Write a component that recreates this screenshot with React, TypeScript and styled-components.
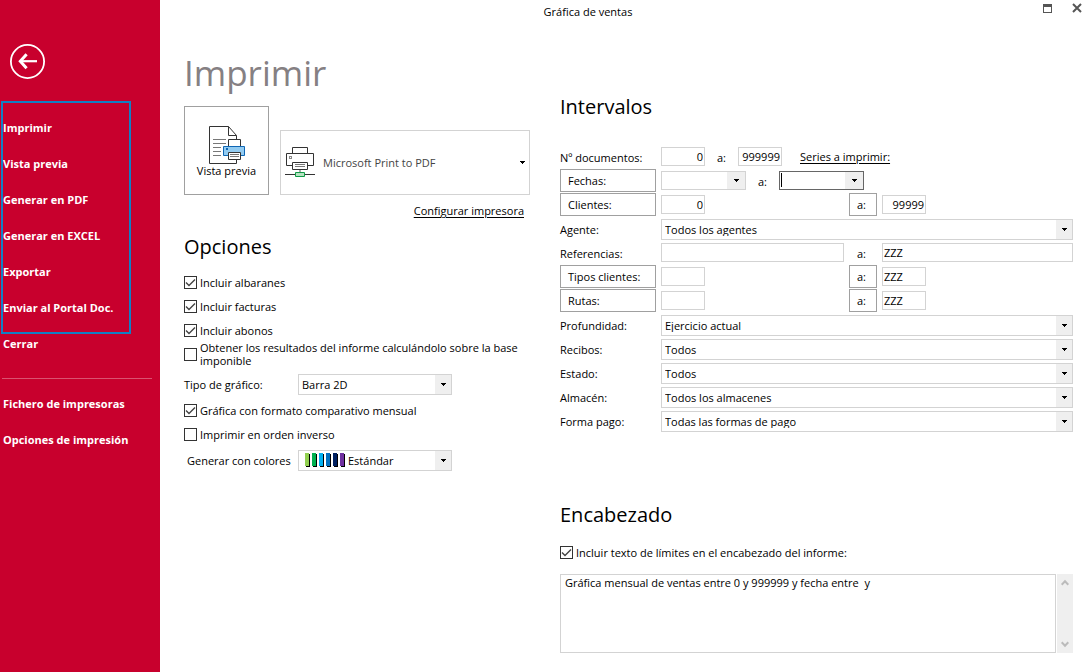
import React, { useId } from "react";
import styled, { createGlobalStyle } from "styled-components";

const GlobalStyle = createGlobalStyle`
  *, *::before, *::after { box-sizing: border-box; }
  body { margin: 0; background: #fff; color: #000; }
  body, button, input, select, textarea {
    font-family: "Open Sans", "Noto Sans", sans-serif;
    font-size: 11px;
    line-height: 13px;
  }
  button, input, select, textarea { margin: 0; padding: 0; border-radius: 0; color: inherit; background: #fff; }
`;

/* ---------- shell ---------- */

const Shell = styled.div`
  display: grid;
  grid-template-columns: 160px minmax(0, 1fr);
  min-height: 100vh;
`;

const Sidebar = styled.nav`
  display: flex;
  flex-direction: column;
  align-items: flex-start;
  padding: 43px 8px 0 1px;
  background: #c8002d;
  color: #fff;
`;

const BackButton = styled.button`
  width: 37px;
  height: 37px;
  margin-left: 8px;
  border: 0;
  background: none;
  svg { display: block; }
`;

const MenuFrame = styled.div`
  display: flex;
  flex-direction: column;
  width: 130px;
  height: 233px;
  margin-top: 21px;
  padding-top: 6px;
  border: 2px solid #127fc4;
`;

const MenuItem = styled.button<{ $compact?: boolean; $indent?: boolean }>`
  height: ${(p) => (p.$compact ? 18 : 36)}px;
  margin-left: ${(p) => (p.$indent ? 2 : 0)}px;
  border: 0;
  background: none;
  color: #fff;
  font-size: 11px;
  font-weight: 700;
  text-align: left;
  white-space: nowrap;
`;

const Divider = styled.hr`
  align-self: stretch;
  height: 1px;
  margin: 26px 0 6px 1px;
  border: 0;
  background: #da5270;
`;

const Main = styled.main`
  display: flex;
  flex-direction: column;
`;

const TitleBar = styled.header`
  display: flex;
  height: 24px;
`;

const WindowTitle = styled.div`
  flex: 1;
  padding-top: 5px;
  text-align: center;
  line-height: 14px;
`;

const WindowControls = styled.div`
  display: flex;
  gap: 14px;
  width: 74px;
  padding-left: 23px;
`;

const IconButton = styled.button`
  display: grid;
  place-items: center;
  width: 16px;
  height: 16px;
  border: 0;
  background: none;
`;

const Columns = styled.div`
  display: grid;
  grid-template-columns: 346px minmax(0, 1fr);
  column-gap: 30px;
  padding: 0 17px 19px 24px;
`;

const Column = styled.div<{ $top: number }>`
  display: flex;
  flex-direction: column;
  padding-top: ${(p) => p.$top}px;
`;

const PageTitle = styled.h1`
  margin: 0;
  color: #858083;
  font-size: 35px;
  font-weight: 400;
  line-height: 48px;
`;

const SectionTitle = styled.h2`
  margin: 0;
  font-size: 20px;
  font-weight: 400;
  line-height: 28px;
`;

const TextLink = styled.a`
  color: #000;
  text-decoration: underline;
  text-underline-offset: 2px;
`;

/* ---------- printer ---------- */

const PrinterRow = styled.div`
  display: grid;
  grid-template-columns: 85px minmax(0, 1fr);
  column-gap: 11px;
  align-items: end;
  margin-top: 9px;
`;

const PreviewButton = styled.button`
  display: flex;
  flex-direction: column;
  align-items: center;
  height: 89px;
  padding-top: 19px;
  border: 1px solid #a0a0a0;
`;

const PrinterLinkRow = styled.div`
  display: flex;
  justify-content: flex-end;
  margin: 9px 0 16px;
  padding-right: 6px;
`;

/* ---------- controls ---------- */

const SelectFrame = styled.div<{ $height: number; $plain?: boolean }>`
  display: grid;
  grid-template-columns: minmax(0, 1fr) ${(p) => (p.$plain ? 13 : 15)}px;
  width: 100%;
  height: ${(p) => p.$height}px;
  border: 1px solid #d3d3d3;
  background: ${(p) =>
    p.$plain ? "#fff" : "linear-gradient(to left, #efefef 16px, #fff 16px)"};
  > * { grid-row: 1; }
`;

const NativeSelect = styled.select<{ $pad: number; $muted?: boolean }>`
  grid-column: 1 / -1;
  appearance: none;
  padding: 0 18px 0 ${(p) => p.$pad}px;
  border: 0;
  outline: 0;
  background: transparent;
  color: ${(p) => (p.$muted ? "#444" : "#000")};
`;

const Leading = styled.span`
  grid-column: 1;
  place-self: center start;
  display: flex;
  pointer-events: none;
`;

const Trailing = styled.span`
  grid-column: 2;
  place-self: center;
  display: flex;
  pointer-events: none;
`;

const TextInput = styled.input<{ $right?: boolean; $wide?: boolean }>`
  width: ${(p) => (p.$wide ? "100%" : "44px")};
  height: 19px;
  padding: 0 1px;
  border: 1px solid #d3d3d3;
  outline: 0;
  text-align: ${(p) => (p.$right ? "right" : "left")};
`;

const ComboFrame = styled.div<{ $active?: boolean }>`
  display: flex;
  width: 85px;
  height: 19px;
  padding-left: 1px;
  border: 1px solid ${(p) => (p.$active ? "#666" : "#d3d3d3")};
  align-items: stretch;
`;

const ComboInput = styled.input`
  flex: 1;
  min-width: 0;
  border: 0;
  outline: 0;
`;

const ComboButton = styled.button`
  display: grid;
  place-items: center;
  width: 18px;
  border: 0;
  background: #efefef;
`;

const Caret = styled.span`
  width: 1px;
  margin: 1px 0 2px;
  background: #000;
`;

const CheckRow = styled.label`
  display: flex;
  align-items: center;
  gap: 3px;
  height: 24px;
`;

const CheckInput = styled.input`
  appearance: none;
  flex: none;
  width: 13px;
  height: 13px;
  border: 1px solid #333;
  background: #fff;
  &:checked {
    background: url("data:image/svg+xml,%3Csvg xmlns='http://www.w3.org/2000/svg' width='11' height='11'%3E%3Cpath d='M1 5.5L4 8.5L10 2.5' fill='none' stroke='%23444' stroke-width='1.4'/%3E%3C/svg%3E") center no-repeat;
  }
`;

const OptionList = styled.div`
  display: flex;
  flex-direction: column;
  margin-top: 9px;
`;

const OptionField = styled.div<{ $pad?: number }>`
  display: grid;
  grid-template-columns: 114px 154px;
  align-items: center;
  height: 26px;
  label { padding-left: ${(p) => p.$pad ?? 0}px; }
`;

const ChartTypeField = styled(OptionField)`
  margin: 5px 0 1px;
`;

const PaletteField = styled(OptionField)`
  margin-top: 1px;
`;

/* ---------- ranges ---------- */

const RangeList = styled.div`
  margin-top: 24px;
`;

const RangeRow = styled.div`
  display: grid;
  grid-template-columns: 96px minmax(0, 1fr);
  column-gap: 5px;
  height: 24px;
`;

const RangeLabel = styled.label`
  padding-top: 6px;
  white-space: nowrap;
`;

const RangeButton = styled.button`
  height: 23px;
  padding-left: 7px;
  border: 1px solid #a0a0a0;
  text-align: left;
`;

const Inline = styled.div<{ $gap: number }>`
  display: flex;
  column-gap: ${(p) => p.$gap}px;
  padding-top: 2px;
`;

const Separator = styled.label`
  width: 9px;
  padding-top: 4px;
`;

const Split = styled.div`
  display: grid;
  grid-template-columns: 183px 28px minmax(0, 1fr);
  column-gap: 5px;
  > input { margin-top: 2px; }
  > label { padding: 6px 0 0 8px; }
`;

const Stretch = styled.div`
  padding-top: 2px;
`;

const SeriesLink = styled(TextLink)`
  padding: 3px 0 0 6px;
`;

/* ---------- heading text ---------- */

const HeaderSection = styled.section`
  display: flex;
  flex-direction: column;
  margin-top: 68px;
`;

const HeaderCheck = styled.div`
  margin: 11px 0 10px;
`;

const MemoFrame = styled.div`
  display: grid;
  grid-template-columns: minmax(0, 1fr) 16px;
  column-gap: 1px;
  height: 79px;
`;

const Memo = styled.textarea`
  padding: 1px 4px;
  border: 1px solid #d3d3d3;
  outline: 0;
  resize: none;
  overflow: hidden;
`;

const ScrollTrack = styled.div`
  display: flex;
  flex-direction: column;
  justify-content: space-between;
  background: #efefef;
  button { height: 17px; }
`;

/* ---------- drawings ---------- */

const DownArrow = () => (
  <svg width="5" height="3" viewBox="0 0 5 3" shapeRendering="crispEdges">
    <path d="M0 0h5v1H4v1H3v1H2V2H1V1H0z" fill="#000" />
  </svg>
);

const BackIcon = () => (
  <svg width="37" height="37" viewBox="0 0 37 37" fill="none" stroke="#fff">
    <circle cx="18.5" cy="18.5" r="16.6" strokeWidth="1.8" />
    <path d="M28 18.2H12" strokeWidth="2.2" />
    <path d="M17.6 11.2L11.3 18.2L17.6 25.2" strokeWidth="3" />
  </svg>
);

const PreviewIcon = () => (
  <svg width="36" height="38" viewBox="0 0 36 38" fill="none">
    <path d="M27.5 37.5H.5V.5H19.5L27.5 9.5V37.5z" fill="#fff" stroke="#333" />
    <path d="M19.5 .5V9.5H27.5" stroke="#333" />
    <path d="M4 13.5H17M4 17.5H17M4 21.5H12M4 25.5H12M4 29.5H12" stroke="#777" />
    <path d="M19.5 20V13.5H31.5V20" fill="#fff" stroke="#333" />
    <path d="M14.5 20.5H35.5V29.5H14.5z" fill="#92cbf1" stroke="#0f66b4" />
    <rect x="17" y="22" width="2" height="2" fill="#0f66b4" />
    <path d="M19.5 26.5H31.5V33.5H19.5z" fill="#fff" stroke="#333" />
    <path d="M21 28.5H30M21 30.5H30" stroke="#777" />
  </svg>
);

const PrinterIcon = () => (
  <svg width="30" height="31" viewBox="0 0 30 31" fill="none">
    <path d="M7.5 6.5V.5H22.5V6.5" fill="#fff" stroke="#333" />
    <path d="M1.5 6.5H28.5V18.5H1.5z" fill="#fff" stroke="#333" />
    <rect x="4.5" y="9.5" width="2" height="2" stroke="#888" />
    <path d="M7.5 15.5H22.5V22.5H7.5z" fill="#fff" stroke="#333" />
    <path d="M10 17.5H20M10 19.5H20" stroke="#777" />
    <path d="M15 23V26" stroke="#aaa" strokeWidth="2" />
    <path d="M0 27.5H30" stroke="#333" />
    <path d="M10.5 25.5H19.5V29.5H10.5z" fill="#b5e3c1" stroke="#119a46" />
  </svg>
);

const palette = ["#92d050", "#00b050", "#00b0f0", "#0070c0", "#002060", "#7030a0"];

const PaletteIcon = () => (
  <svg width="41" height="14" viewBox="0 0 41 14" shapeRendering="crispEdges">
    {palette.map((color, i) => (
      <g key={color}>
        <rect x={i * 7 + 1} y="1" width="4" height="13" fill="#000" />
        <rect x={i * 7} y="0" width="4" height="13" fill={color} />
      </g>
    ))}
  </svg>
);

const RestoreIcon = () => (
  <svg width="9" height="9" viewBox="0 0 9 9" shapeRendering="crispEdges">
    <path d="M0 0h9v9H0zM1 3v5h7V3z" fill="#555" fillRule="evenodd" />
  </svg>
);

const CloseIcon = () => (
  <svg width="10" height="10" viewBox="0 0 10 10">
    <path d="M1 1L9 9M9 1L1 9" stroke="#555" strokeWidth="2" />
  </svg>
);

const ScrollChevron = ({ down }: { down?: boolean }) => (
  <svg width="8" height="7" viewBox="0 0 8 7" fill="none" stroke="#bbb" strokeWidth="2">
    <path d={down ? "M.7 1.3L4 4.8L7.3 1.3" : "M.7 5.7L4 2.2L7.3 5.7"} />
  </svg>
);

/* ---------- composed parts ---------- */

type SelectProps = {
  id?: string;
  label?: string;
  value: string;
  height?: number;
  pad?: number;
  muted?: boolean;
  leading?: React.ReactNode;
};

const Select = ({ id, label, value, height = 21, pad = 3, muted, leading }: SelectProps) => (
  <SelectFrame $height={height} $plain={muted}>
    <NativeSelect id={id} aria-label={label} $pad={pad} $muted={muted}>
      <option>{value}</option>
    </NativeSelect>
    {leading && <Leading>{leading}</Leading>}
    <Trailing><DownArrow /></Trailing>
  </SelectFrame>
);

const Check = ({ children, checked }: { children: React.ReactNode; checked?: boolean }) => (
  <CheckRow>
    <CheckInput type="checkbox" defaultChecked={checked} />
    <span>{children}</span>
  </CheckRow>
);

const DateCombo = ({ id, label, active }: { id?: string; label: string; active?: boolean }) => (
  <ComboFrame $active={active}>
    {active && <Caret />}
    <ComboInput id={id} type="text" aria-label={label} />
    <ComboButton type="button" aria-label="Abrir calendario"><DownArrow /></ComboButton>
  </ComboFrame>
);

const CodeRange = ({ name, from, to, right }: { name: string; from: string; to: string; right?: boolean }) => (
  <RangeRow>
    <RangeButton type="button">{name}:</RangeButton>
    <Split>
      <TextInput type="text" aria-label={`${name} desde`} defaultValue={from} $right={right} />
      <RangeButton type="button">a:</RangeButton>
      <TextInput type="text" aria-label={`${name} hasta`} defaultValue={to} $right={right} />
    </Split>
  </RangeRow>
);

const SelectRange = ({ name, value }: { name: string; value: string }) => {
  const id = useId();
  return (
    <RangeRow>
      <RangeLabel htmlFor={id}>{name}:</RangeLabel>
      <Stretch><Select id={id} value={value} /></Stretch>
    </RangeRow>
  );
};

const LeadPad = styled.span<{ $left: number }>`
  display: flex;
  padding-left: ${(p) => p.$left}px;
`;

const PrinterLead = () => <LeadPad $left={4}><PrinterIcon /></LeadPad>;
const PaletteLead = () => <LeadPad $left={6}><PaletteIcon /></LeadPad>;

const actions = ["Imprimir", "Vista previa", "Generar en PDF", "Generar en EXCEL", "Exportar", "Enviar al Portal Doc."];

export default function App() {
  return (
    <>
      <GlobalStyle />
      <Shell>
        <Sidebar>
          <BackButton type="button" aria-label="Volver"><BackIcon /></BackButton>
          <MenuFrame>
            {actions.map((name) => <MenuItem key={name} type="button">{name}</MenuItem>)}
          </MenuFrame>
          <MenuItem type="button" $compact $indent>Cerrar</MenuItem>
          <Divider />
          <MenuItem type="button" $indent>Fichero de impresoras</MenuItem>
          <MenuItem type="button" $indent>Opciones de impresión</MenuItem>
        </Sidebar>
        <Main>
          <TitleBar>
            <WindowTitle>Gráfica de ventas</WindowTitle>
            <WindowControls>
              <IconButton type="button" aria-label="Maximizar"><RestoreIcon /></IconButton>
              <IconButton type="button" aria-label="Cerrar ventana"><CloseIcon /></IconButton>
            </WindowControls>
          </TitleBar>
          <Columns>
            <Column $top={25}>
              <PageTitle>Imprimir</PageTitle>
              <PrinterRow>
                <PreviewButton type="button"><PreviewIcon />Vista previa</PreviewButton>
                <Select
                  label="Impresora"
                  value="Microsoft Print to PDF"
                  height={65}
                  pad={42}
                  muted
                  leading={<PrinterLead />}
                />
              </PrinterRow>
              <PrinterLinkRow><TextLink href="#configurar">Configurar impresora</TextLink></PrinterLinkRow>
              <SectionTitle>Opciones</SectionTitle>
              <OptionList>
                <Check checked>Incluir albaranes</Check>
                <Check checked>Incluir facturas</Check>
                <Check checked>Incluir abonos</Check>
                <Check>Obtener los resultados del informe calculándolo sobre la base imponible</Check>
                <ChartTypeField>
                  <label htmlFor="tipo">Tipo de gráfico:</label>
                  <Select id="tipo" value="Barra 2D" />
                </ChartTypeField>
                <Check checked>Gráfica con formato comparativo mensual</Check>
                <Check>Imprimir en orden inverso</Check>
                <PaletteField $pad={3}>
                  <label htmlFor="colores">Generar con colores</label>
                  <Select id="colores" value="Estándar" pad={49} leading={<PaletteLead />} />
                </PaletteField>
              </OptionList>
            </Column>
            <Column $top={69}>
              <SectionTitle>Intervalos</SectionTitle>
              <RangeList>
                <RangeRow>
                  <RangeLabel htmlFor="doc-desde">Nº documentos:</RangeLabel>
                  <Inline $gap={12}>
                    <TextInput id="doc-desde" type="text" defaultValue="0" $right />
                    <Separator htmlFor="doc-hasta">a:</Separator>
                    <TextInput id="doc-hasta" type="text" defaultValue="999999" $right />
                    <SeriesLink href="#series">Series a imprimir:</SeriesLink>
                  </Inline>
                </RangeRow>
                <RangeRow>
                  <RangeButton type="button">Fechas:</RangeButton>
                  <Inline $gap={12}>
                    <DateCombo label="Fecha desde" />
                    <Separator htmlFor="fecha-hasta">a:</Separator>
                    <DateCombo id="fecha-hasta" label="Fecha hasta" active />
                  </Inline>
                </RangeRow>
                <CodeRange name="Clientes" from="0" to="99999" right />
                <SelectRange name="Agente" value="Todos los agentes" />
                <RangeRow>
                  <RangeLabel htmlFor="ref-desde">Referencias:</RangeLabel>
                  <Split>
                    <TextInput id="ref-desde" type="text" $wide />
                    <label htmlFor="ref-hasta">a:</label>
                    <TextInput id="ref-hasta" type="text" defaultValue="ZZZ" $wide />
                  </Split>
                </RangeRow>
                <CodeRange name="Tipos clientes" from="" to="ZZZ" />
                <CodeRange name="Rutas" from="" to="ZZZ" />
                <SelectRange name="Profundidad" value="Ejercicio actual" />
                <SelectRange name="Recibos" value="Todos" />
                <SelectRange name="Estado" value="Todos" />
                <SelectRange name="Almacén" value="Todos los almacenes" />
                <SelectRange name="Forma pago" value="Todas las formas de pago" />
              </RangeList>
              <HeaderSection>
                <SectionTitle>Encabezado</SectionTitle>
                <HeaderCheck>
                  <Check checked>Incluir texto de límites en el encabezado del informe:</Check>
                </HeaderCheck>
                <MemoFrame>
                  <Memo
                    aria-label="Texto del encabezado"
                    defaultValue="Gráfica mensual de ventas entre 0 y 999999 y fecha entre  y"
                  />
                  <ScrollTrack>
                    <IconButton type="button" aria-label="Subir"><ScrollChevron /></IconButton>
                    <IconButton type="button" aria-label="Bajar"><ScrollChevron down /></IconButton>
                  </ScrollTrack>
                </MemoFrame>
              </HeaderSection>
            </Column>
          </Columns>
        </Main>
      </Shell>
    </>
  );
}
